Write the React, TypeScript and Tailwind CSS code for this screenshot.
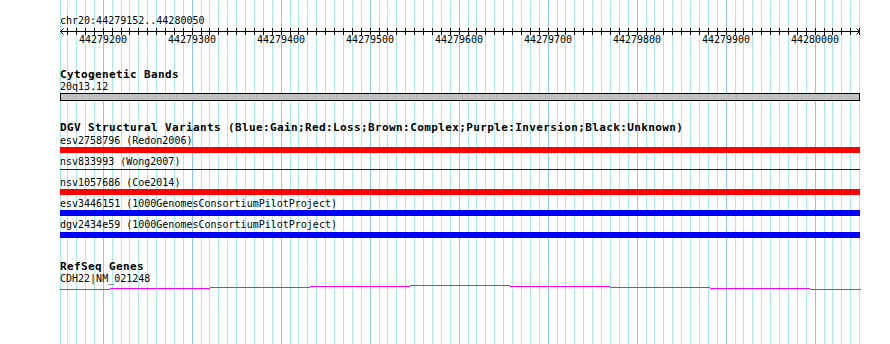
const START = 44279152
const END = 44280050
const LEFT = 60
const WIDTH = 800

// pixel column for a base position
const px = (pos: number) => Math.floor(LEFT + 0.5 + ((pos - START) * WIDTH) / (END - START + 1))

const ticks: number[] = []
for (let p = 44279160; p <= END; p += 10) ticks.push(p)
const majors = ticks.filter((p) => p % 100 === 0)

const variants = [
  { label: "esv2758796 (Redon2006)", color: "bg-[#ff0000]", bar: "h-[6px]", gap: "mt-[2px]", after: "mt-[1px]" },
  { label: "nsv833993 (Wong2007)", color: "bg-[#0000ff]", bar: "h-[1px]", gap: "mt-[3px]", after: "mt-[2px]" },
  { label: "nsv1057686 (Coe2014)", color: "bg-[#ff0000]", bar: "h-[6px]", gap: "mt-[7px]", after: "mt-[1px]" },
  { label: "esv3446151 (1000GenomesConsortiumPilotProject)", color: "bg-[#0000ff]", bar: "h-[6px]", gap: "mt-[3px]", after: "mt-[1px]" },
  { label: "dgv2434e59 (1000GenomesConsortiumPilotProject)", color: "bg-[#0000ff]", bar: "h-[6px]", gap: "mt-[3px]", after: "mt-[2px]" },
]

// intron line of the gene, drawn in steps like the original raster
const geneSteps = [
  [60, 110, 288], [110, 210, 287], [210, 310, 286], [310, 410, 285], [410, 510, 284],
  [510, 610, 285], [610, 710, 286], [710, 810, 287], [810, 861, 288],
]

function Grid() {
  return (
    <svg className="absolute inset-0" width={890} height={344}>
      <rect x={60} y={0} width={1} height={344} fill="#aaeaea" />
      {ticks.map((p) => (
        <rect key={p} x={px(p)} y={0} width={1} height={344} fill={p % 100 === 0 ? "#8cc8ec" : "#aaeaea"} />
      ))}
    </svg>
  )
}

function Ruler() {
  return (
    <svg width={802} height={20} className="block overflow-visible">
      <line x1={0} y1={5.5} x2={800} y2={5.5} stroke="#000" strokeWidth={1} />
      <polyline points="3.5,2.5 0.5,5.5 3.5,8.5" fill="none" stroke="#000" strokeWidth={1} />
      <polyline points="796.5,2.5 799.5,5.5 796.5,8.5" fill="none" stroke="#000" strokeWidth={1} />
      {ticks.map((p) => (
        <line key={p} x1={px(p) - LEFT + 0.5} y1={2} x2={px(p) - LEFT + 0.5} y2={9} stroke="#000" strokeWidth={1} />
      ))}
      {majors.map((p) => (
        <text
          key={p}
          x={px(p) - LEFT}
          y={16.5}
          textAnchor="middle"
          fontSize={10}
          fontFamily="'DejaVu Sans Mono', monospace"
          fill="#000"
        >
          {p}
        </text>
      ))}
    </svg>
  )
}

export default function App() {
  return (
    <div className="relative w-[890px] h-[344px] overflow-hidden bg-white text-black font-['DejaVu_Sans_Mono',monospace]">
      <Grid />
      <div className="relative pl-[60px] w-[861px]">
        {/* ruler */}
        <div className="pt-[15px] h-[26px] text-[10px] leading-[11px]">chr20:44279152..44280050</div>
        <Ruler />

        {/* cytogenetic bands */}
        <div className="mt-[23px] h-[11px] text-[11px] leading-[11px] font-bold tracking-[0.38px]">Cytogenetic Bands</div>
        <div className="mt-[1px] h-[11px] text-[10px] leading-[11px]">20q13.12</div>
        <div className="mt-[1px] h-[8px] w-[800px] border border-black bg-[#c0c0c0]" />

        {/* DGV variants */}
        <div className="mt-[21px] h-[11px] text-[11px] leading-[11px] font-bold tracking-[0.38px] whitespace-nowrap">
          DGV Structural Variants (Blue:Gain;Red:Loss;Brown:Complex;Purple:Inversion;Black:Unknown)
        </div>
        {variants.map((v) => (
          <div key={v.label}>
            <div className={`${v.gap} h-[11px] text-[10px] leading-[11px] whitespace-nowrap`}>{v.label}</div>
            <div className={`${v.after} ${v.bar} ${v.color} w-[800px]`} />
          </div>
        ))}

        {/* RefSeq genes */}
        <div className="mt-[23px] h-[11px] text-[11px] leading-[11px] font-bold tracking-[0.38px]">RefSeq Genes</div>
        <div className="mt-[1px] h-[11px] text-[10px] leading-[11px]">CDH22|NM_021248</div>
        <svg width={801} height={8} className="block">
          {geneSteps.map(([a, b, y]) => (
            <rect key={a} x={a - LEFT} y={y - 283} width={b - a} height={1} fill="#ff00ff" />
          ))}
        </svg>
      </div>
    </div>
  )
}
